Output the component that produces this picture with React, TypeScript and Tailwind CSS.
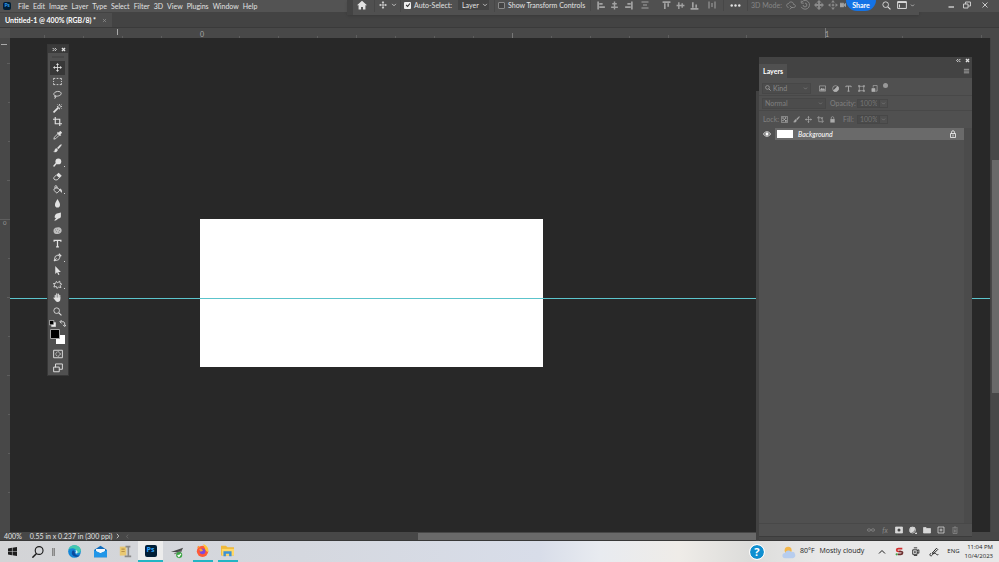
import React from "react";

type IconProps = { children: React.ReactNode; className?: string; box?: string };

/* Line icon on a 16-unit grid */
function Icon({ children, className = "size-[10px]", box = "0 0 16 16" }: IconProps) {
  return (
    <svg viewBox={box} className={`shrink-0 ${className}`} fill="none" stroke="currentColor" strokeWidth="1.5" aria-hidden="true">
      {children}
    </svg>
  );
}

const moveShape = (
  <>
    <path d="M8 2v12M2 8h12" />
    <path d="M8 0l2.6 3.4H5.4zM8 16l2.6-3.4H5.4zM0 8l3.4-2.6v5.2zM16 8l-3.4-2.6v5.2z" fill="currentColor" stroke="none" />
  </>
);
const brushShape = (
  <path d="M15 1c-1-.6-3 1-7.500 6.200l1.800 1.800C13.500 5 15.700 2 15 1zM6.500 8.200c-1.600-.2-2.700.8-3 2.300C3.200 12 2.500 13 1 13.500c2 1.500 6.800 1.200 7.300-3.200z" fill="currentColor" stroke="currentColor" strokeWidth=".6" />
);
const searchShape = (
  <>
    <circle cx="6.500" cy="6.500" r="5" />
    <path d="M10.300 10.300L15 15" strokeWidth="2" />
  </>
);
const lockShape = (
  <>
    <path d="M3 7h10v8H3z" fill="currentColor" stroke="none" />
    <path d="M5 7V4.500a3 3 0 0 1 6 0V7" />
  </>
);

const tools: { name: string; more?: boolean; art: React.ReactNode }[] = [
  { name: "Move", art: moveShape },
  { name: "Rectangular marquee", art: <path d="M1 5V2.500H4M6.500 2.500h3M12 2.500h3V5M15 7v2M15 11v2.500H12M9.500 13.500h-3M4 13.500H1V11M1 9V7" /> },
  { name: "Lasso", art: <path d="M4.500 10.500C1 9.500.5 6.500 3 4.500s7.500-2.800 10-1 2 4.800-1 6.200-5.500 1.500-7.500.8c-2 0-2 2.500-.2 2.500s1.500-2-.3-2.300M4 13c.3 1.500-.5 2.500-1.500 3" /> },
  { name: "Magic wand", art: <><path d="M1 15L10 6" strokeWidth="3" /><path d="M11.500 0v3M11.500 6.500v3M7 4.500h2.500M13 4.500h3M8 1l1.500 1.500M15 1l-1.500 1.500M15 8l-1.500-1.500" /></> },
  { name: "Crop", art: <path d="M4 0v12h12M0 4h12v12" strokeWidth="2" /> },
  { name: "Eyedropper", art: <><path d="M8.500 5L2.500 11 1.500 14.500 5 13.500 11 7.500" /><path d="M7.500 3.500l1-1 1.500 1L12 1.200c1.500-1.200 4 1 2.800 2.800L12.500 6l1 1.500-1 1z" fill="currentColor" /></> },
  { name: "Brush", art: brushShape },
  { name: "Dodge", more: true, art: <><circle cx="9.500" cy="6" r="5.200" fill="currentColor" stroke="none" /><path d="M6 9.500L1 15" strokeWidth="2.500" /></> },
  { name: "Eraser", art: <><path d="M5.500 5.500L10 1.500 15.500 6.500l-4 4z" fill="currentColor" stroke="none" /><path d="M5.500 5.500L1.500 10v2.500l2 1.500h4l3.500-3.500" /></> },
  { name: "Paint bucket", more: true, art: <><path d="M6 3.500L12.500 9 7 14.500 1 9z" /><path d="M3.500 7V2.500C3.500.5 7 .5 7 3v4" /><path d="M12.500 7c2 .5 3 2 2.500 6-1-1.500-1.500-3-3-4z" fill="currentColor" /></> },
  { name: "Blur", art: <path d="M8 0c2 4 4.500 6.500 4.500 10a4.500 5 0 0 1-9 0C3.500 6.500 6 4 8 0z" fill="currentColor" stroke="none" /> },
  { name: "Smudge", art: <path d="M3 8c0-3 3-6 6-6l5-1v7c0 2-2 3.500-4 3.500L5 15H2l4-5-2 .5c-1 0-1-1.500-1-2.500z" fill="currentColor" stroke="none" /> },
  { name: "Sponge", art: <><path d="M1 6.500C2 3 8 1.500 12 2.500c3 1 4 4.500 3 7.500-1 3-6 4.500-10 4C1.500 13.500.5 10 1 6.500z" fill="currentColor" stroke="none" opacity=".75" /><path d="M4 7h1M8 6h1M11 8h1M6 10h1M9 11h1" stroke="#555" /></> },
  { name: "Type", art: <path d="M2 5V2.500h12V5M8 2.500v12M5.500 14h5" strokeWidth="2.200" /> },
  { name: "Pen", more: true, art: <><path d="M2 14L4 6l5-2.500L12.500 7 10 12z" /><path d="M2 14l4.500-4.500" /><path d="M9.500 2.500l1.500-2 4.500 4.500-2 1.500z" fill="currentColor" stroke="none" /></> },
  { name: "Path selection", art: <path d="M4 0v14l3.300-3 2 5 2.200-1-2.200-4.500H14z" fill="currentColor" stroke="none" /> },
  { name: "Custom shape", more: true, art: <path d="M6 2.500l2 2.500 4-3 .5 4 3 1-2.500 2.500 1 4-4-1-3 2.500-1-3.500-4.500 1 1.500-4-2.500-2 4-.5z" /> },
  { name: "Hand", art: <><path d="M4 9V4M6.700 8V1.500M9.500 8V2M12 9V4" strokeWidth="2" strokeLinecap="round" /><path d="M3 8h10v3c0 3-2 5-4.500 5S5 14.500 3.500 12.500L.5 9c0-1.500 1.500-1.200 2.500 0z" fill="currentColor" stroke="none" /></> },
  { name: "Zoom", art: searchShape },
];

const menus = ["File", "Edit", "Image", "Layer", "Type", "Select", "Filter", "3D", "View", "Plugins", "Window", "Help"];

function PsMark({ className }: { className: string }) {
  return (
    <span className={`flex shrink-0 items-center justify-center rounded-[2px] bg-[#001e36] font-bold text-[#31a8ff] ${className}`}>Ps</span>
  );
}

function Chevron({ className = "size-[6px]" }: { className?: string }) {
  return <Icon className={className}><path d="M3 5l5 5 5-5" strokeWidth="2" /></Icon>;
}

function MenuBar() {
  return (
    <header className="flex h-[12px] shrink-0 items-center bg-[#535353] pl-[3px]">
      <PsMark className="size-[8px] text-[5px]" />
      <nav className="ml-[7px] flex gap-[4px] text-[7px] leading-[12px]">
        {menus.map((m) => (
          <button key={m} type="button">{m}</button>
        ))}
      </nav>
    </header>
  );
}

const alignIcons: { name: string; art: React.ReactNode; place: string }[] = [
  { name: "Align left", place: "ml-[6px]", art: <path d="M2 1v14M4 5h6M4 11h10" strokeWidth="3" /> },
  { name: "Align centre", place: "ml-[4px]", art: <path d="M8 1v14M4 5h8M2 11h12" strokeWidth="2.500" /> },
  { name: "Align right", place: "ml-[5px]", art: <path d="M14 1v14M6 5h6M2 11h10" strokeWidth="3" /> },
  { name: "Distribute", place: "ml-[8px]", art: <path d="M1 2h14M4 8h8M1 14h14" strokeWidth="2" /> },
  { name: "Align top", place: "ml-[13px]", art: <path d="M1 2h14M5 4v10M11 4v6" strokeWidth="3" /> },
  { name: "Align middle", place: "ml-[5px]", art: <path d="M1 8h14M5 2v12M11 4v8" strokeWidth="2.500" /> },
  { name: "Align bottom", place: "ml-[5px]", art: <path d="M1 14h14M5 2v10M11 6v6" strokeWidth="3" /> },
  { name: "Distribute across", place: "ml-[9px]", art: <path d="M2 1v14M8 4v8M14 1v14" strokeWidth="2" /> },
];

const threeD: React.ReactNode[] = [
  <path key="o" d="M4 12C0 11 0 6 4 6c1-4 8-4 8 1 4 0 4 5 0 5H8M6 9l3 3-3 3" />,
  <path key="r" d="M3 3a7 7 0 1 1-1 8M2 1v4h4M8 5a3 3 0 1 1-3 3" />,
  <><path key="p" d="M8 2v12M2 8h12" strokeWidth="3" /><path d="M8 0l4 4H4zM8 16l4-4H4zM0 8l4-4v8zM16 8l-4-4v8z" fill="currentColor" stroke="none" /></>,
  <><path key="s" d="M6 8h4M8 6v4" strokeWidth="2" /><path d="M8 0l3 4H5zM8 16l3-4H5zM0 8l4-3v6zM16 8l-4-3v6z" fill="currentColor" stroke="none" /></>,
];

function Rule({ className }: { className: string }) {
  return <span className={`h-[12px] w-px shrink-0 bg-[#474747] ${className}`} />;
}

function OptionsBar() {
  return (
    <section aria-label="Tool options" className="absolute left-[347px] top-0 flex h-[15px] w-[572px] items-start border-l-[6px] border-[#434343] bg-[#505050] pl-[4px] text-[7px] leading-[10px] shadow">
      <button type="button" aria-label="Home" className="flex h-[10px] items-center">
        <Icon><path d="M8 1L0 8.500h2.500V15H6.500v-4h3v4h4V8.500H16z" fill="currentColor" stroke="none" /></Icon>
      </button>
      <Rule className="ml-[7px]" />
      <button type="button" aria-label="Move tool presets" className="ml-[4px] flex h-[10px] items-center gap-[4px]">
        <Icon className="size-[8px]">{moveShape}</Icon>
        <Chevron />
      </button>
      <Rule className="ml-[3px]" />
      <label className="ml-[3px] flex h-[10px] w-[54px] shrink-0 items-center gap-[3px] whitespace-nowrap">
        <input type="checkbox" defaultChecked className="peer sr-only" />
        <span className="flex size-[7px] items-center justify-center rounded-[1px] bg-[#f0f0f0] text-[#333]">
          <Icon className="size-[6px]"><path d="M3 8l4 4 6-8" strokeWidth="3" /></Icon>
        </span>
        Auto-Select:
      </label>
      <label className="relative flex h-[10px] items-center bg-[#434343]">
        <select aria-label="Auto-select target" className="h-[10px] w-[31px] appearance-none bg-transparent pl-[4px] leading-[10px] outline-none">
          <option>Layer</option>
          <option>Group</option>
        </select>
        <span className="pointer-events-none absolute right-[1px] flex"><Chevron /></span>
      </label>
      <Rule className="ml-[5px]" />
      <label className="ml-[3px] flex h-[10px] items-center gap-[3px] whitespace-nowrap">
        <input type="checkbox" className="size-[7px] appearance-none rounded-[1px] border border-[#8a8a8a] bg-[#444]" />
        Show Transform Controls
      </label>
      <div className="ml-auto flex h-[12px] w-[333px] shrink-0 items-center pb-[2px]">
        <Rule className="ml-[4px]" />
        <div className="flex items-center text-[#a2a2a2]">
          {alignIcons.map((a) => (
            <button key={a.name} type="button" aria-label={a.name} className={`flex ${a.place}`}>
              <Icon className={a.name.startsWith("Align") ? "size-[9px]" : "size-[8px]"}>{a.art}</Icon>
            </button>
          ))}
        </div>
        <Rule className="ml-[7px]" />
        <button type="button" aria-label="More options" className="ml-[6px] flex">
          <Icon className="size-[11px]"><g fill="currentColor" stroke="none"><circle cx="2.500" cy="8" r="1.800" /><circle cx="8" cy="8" r="1.800" /><circle cx="13.500" cy="8" r="1.800" /></g></Icon>
        </button>
        <Rule className="ml-[6px]" />
        <span className="ml-[3px] w-[35px] whitespace-nowrap text-[#868686]">3D Mode:</span>
        <div className="flex gap-[4px] text-[#8a8a8a]">
          {threeD.map((s, i) => (
            <Icon key={i}>{s}</Icon>
          ))}
        </div>
        <Icon className="ml-[2px] size-[6px] text-[#a2a2a2]"><path d="M0 3h10v10H0zM10 8l6-5v10z" fill="currentColor" /></Icon>
        <button type="button" className="h-[11px] w-[30px] shrink-0 rounded-b-full bg-[#1473e6] font-bold text-white">Share</button>
        <button type="button" aria-label="Search" className="ml-[6px] flex"><Icon className="size-[9px]">{searchShape}</Icon></button>
        <button type="button" aria-label="Workspace" className="ml-[6px] flex items-center gap-[3px]">
          <Icon className="size-[10px]"><path d="M1 2.500h14v11H1zM1 4h14M4 7v5" strokeWidth="1.500" /></Icon>
          <Chevron className="size-[5px]" />
        </button>
      </div>
    </section>
  );
}

function WindowButtons() {
  return (
    <div className="absolute right-0 top-0 flex h-[12px] w-[80px] items-center justify-end gap-[8px] bg-[#505050] pb-[2px] pr-[10px] text-[#c8c8c8]">
      <button type="button" aria-label="Minimise"><Icon className="size-[8px]"><path d="M3 12h11" strokeWidth="3" /></Icon></button>
      <button type="button" aria-label="Restore"><Icon className="size-[8px]"><path d="M1 6h9v8H1zM5 6V2h10v8h-5" strokeWidth="2" /></Icon></button>
      <button type="button" aria-label="Close" className="ml-[2px]"><Icon className="size-[8px]"><path d="M3 3l10 10M13 3L3 13" strokeWidth="2" /></Icon></button>
    </div>
  );
}

function TopRuler() {
  return (
    <div className="h-[11px] shrink-0 border-t border-[#3a3a3a] bg-[#484848]">
      <svg width="990" height="10" className="block" aria-hidden="true">
        <path d="M0 10V0h10v10" fill="#505050" />
        <path d="M117.500 1v6" stroke="#aaa" />
        <path d="M512.500 5v5M825.500 0v10" stroke="#777" />
        <path d="M44.500 7v3M83.500 8v2M122.500 8v2M161.500 8v2M239.500 8v2M278.500 8v2M317.500 8v2M356.500 7v3M395.500 8v2M434.500 8v2M473.500 8v2M551.500 8v2M590.500 8v2M629.500 8v2M668.500 7v3M746.500 7v3M902.500 8v2M981.500 7v3" stroke="#5e5e5e" />
        <text x="200" y="9" fontSize="7" fill="#a8a8a8">0</text>
        <text x="825" y="9" fontSize="7" fill="#a8a8a8">1</text>
      </svg>
    </div>
  );
}

function SideRuler() {
  return (
    <div className="w-[10px] shrink-0 overflow-hidden bg-[#484848]">
      <svg width="10" height="494" className="block" aria-hidden="true">
        <path d="M1 6.500h6" stroke="#aaa" />
        <path d="M7 25.500h3M8 64.500h2M8 103.500h2M7 142.500h3M0 181.500h10M8 220.500h2M7 259.500h3M8 298.500h2M7 337.500h3M8 376.500h2M8 415.500h2M8 454.500h2" stroke="#5e5e5e" />
        <text x="3" y="187" fontSize="6" fill="#999">0</text>
      </svg>
    </div>
  );
}

function Workspace() {
  return (
    <main className="flex min-h-0 flex-1">
      <SideRuler />
      <div className="relative min-w-0 flex-1 overflow-hidden bg-[#282828]">
        <div className="absolute left-[190px] top-[181px] h-[148px] w-[343px] bg-white" />
        <div className="absolute inset-x-0 top-[260px] h-px bg-[#5cc4cc]" />
      </div>
      <div className="flex w-[9px] shrink-0 flex-col border-l border-[#424242] bg-[#484848]">
        <div className="mx-auto mt-[122px] h-[233px] w-[7px] bg-[#696969]" />
      </div>
    </main>
  );
}

function ToolBox() {
  return (
    <aside aria-label="Tools" className="absolute left-[48px] top-[45px] w-[20px] bg-[#505050] outline-1 outline-[#373737]">
      <div className="flex h-[8px] items-center justify-end gap-[4px] bg-[#3a3a3a] pr-[2px]">
        <Icon className="size-[5px]"><path d="M2 3l5 5-5 5M9 3l5 5-5 5" strokeWidth="3" /></Icon>
        <Icon className="size-[5px]"><path d="M3 3l10 10M13 3L3 13" strokeWidth="4" /></Icon>
      </div>
      <div className="mx-auto mt-[3px] h-[2px] w-[12px] bg-[#474747]" />
      <div className="mt-[3px] flex h-[257px] flex-col">
        {tools.map((t, i) => (
          <button key={t.name} type="button" aria-label={t.name} className={`relative ml-[2px] mr-[3px] flex min-h-0 flex-1 items-center justify-center ${i === 0 ? "bg-[#383838]" : ""}`}>
            <Icon className="size-[9px]">{t.art}</Icon>
            {t.more && <span className="absolute bottom-[2px] right-0 size-[1px] bg-[#d0d0d0]" />}
          </button>
        ))}
      </div>
      <div className="mt-[2px] flex h-[6px] items-center justify-between pl-[1px] pr-[2px]">
        <Icon className="size-[7px]"><path d="M6 6h9v9H6z" fill="#eee" /><path d="M1 1h10v10H1z" fill="#000" /></Icon>
        <Icon className="size-[7px]"><path d="M3 4h6c3 0 4 2 4 5v4M6 0L2 4l4 4M9 11l4 4 3-4" strokeWidth="2" /></Icon>
      </div>
      <svg viewBox="0 0 16 16" className="mx-auto mt-[3px] block size-[16px]" role="img" aria-label="Foreground and background colours">
        <path d="M6 6h9v9H6z" fill="#fff" />
        <path d="M.5.500h9v9h-9z" fill="#000" stroke="#a5a5a5" />
      </svg>
      <button type="button" aria-label="Quick mask" className="mx-auto mt-[4px] flex"><Icon><path d="M1 2h14v12H1z" /><circle cx="8" cy="8" r="3.500" strokeDasharray="2 1" /></Icon></button>
      <button type="button" aria-label="Screen mode" className="mx-auto mt-[4px] flex"><Icon><path d="M4 7V1.500h11V10h-5M1 6.500h9V14H1z" /></Icon></button>
      <div className="h-[2px]" />
    </aside>
  );
}

const filterIcons: React.ReactNode[] = [
  <><path d="M1 2h14v12H1z" /><path d="M3 12l3-5 3 3 2-2 2 4z" fill="currentColor" /></>,
  <><circle cx="8" cy="8" r="6.500" /><path d="M3 13A7 7 0 0 0 13 3z" fill="currentColor" /></>,
  <path d="M2 5V2.500h12V5M8 2.500v12M5.500 14h5" strokeWidth="2" />,
  <path d="M3 3h10v10H3zM1 1h3v3H1zM12 1h3v3h-3zM1 12h3v3H1zM12 12h3v3h-3z" />,
  <><path d="M5 6V1h9v13h-4" /><path d="M2 8h7v7H2z" fill="currentColor" /></>,
];
const lockIcons: React.ReactNode[] = [
  <><path d="M1 1h14v14H1z" /><path d="M3 3h3v3H3zM9 3h3v3H9zM6 6h3v3H6zM3 9h3v3H3zM9 9h4v4H9z" fill="currentColor" stroke="none" /></>,
  brushShape,
  moveShape,
  <path d="M0 4h12v12M4 4v9h7M4 0v4M12 12h4M9 7l5-4" />,
  lockShape,
];

function PanelValue({ label, id, labelClass }: { label: string; id: string; labelClass: string }) {
  return (
    <div className="flex items-center text-[#808080]">
      <label htmlFor={id} className={`shrink-0 whitespace-nowrap ${labelClass}`}>{label}</label>
      <input id={id} defaultValue="100%" className="h-[9px] w-[23px] border border-[#474747] bg-[#4a4a4a] px-[2px] text-[7px] text-[#747474] outline-none" />
      <span className="flex h-[9px] w-[8px] items-center justify-center border border-l-0 border-[#474747]"><Chevron className="size-[5px]" /></span>
    </div>
  );
}

function LayersPanel() {
  return (
    <aside aria-label="Layers panel" className="absolute bottom-[25px] right-[27px] top-[57px] flex w-[213px] flex-col bg-[#505050] text-[7px] leading-[9px]">
      <div className="flex h-[7px] items-center justify-end gap-[4px] bg-[#434343] pr-[2px]">
        <Icon className="size-[5px]"><path d="M7 3L2 8l5 5M14 3L9 8l5 5" strokeWidth="3" /></Icon>
        <Icon className="size-[5px]"><path d="M3 3l10 10M13 3L3 13" strokeWidth="4" /></Icon>
      </div>
      <div className="flex h-[14px] items-center justify-between bg-[#434343] pr-[2px]">
        <h2 className="flex h-full items-center bg-[#505050] px-[4px] font-bold text-white">Layers</h2>
        <button type="button" aria-label="Panel menu" className="flex text-[#aaa]"><Icon className="size-[7px]"><path d="M2 3h12M2 7h12M2 11h12" strokeWidth="2" /></Icon></button>
      </div>
      <div className="flex h-[18px] shrink-0 items-center border-b border-[#484848] pl-[3px] pt-[3px]">
        <label className="flex h-[11px] w-[49px] items-center border border-[#474747] bg-[#4c4c4c] px-[2px] text-[#8a8a8a]">
          <Icon className="size-[6px] text-[#bbb]">{searchShape}</Icon>
          <select aria-label="Filter kind" className="ml-[2px] min-w-0 flex-1 appearance-none bg-transparent outline-none"><option>Kind</option><option>Name</option></select>
          <Chevron className="size-[5px]" />
        </label>
        <div className="ml-[8px] flex gap-[5px] text-[#b0b0b0]">
          {filterIcons.map((s, i) => (
            <button key={i} type="button" aria-label={`Filter ${i + 1}`} className="flex w-[8px]"><Icon className="size-[7px]">{s}</Icon></button>
          ))}
        </div>
        <span className="mb-[5px] ml-[4px] size-[5px] rounded-full bg-[#999]" />
      </div>
      <div className="flex h-[15px] shrink-0 items-center border-b border-[#484848] pl-[3px]">
        <label className="mr-[4px] flex h-[11px] w-[64px] items-center border border-[#474747] bg-[#4c4c4c] px-[2px] text-[#808080]">
          <select aria-label="Blend mode" className="min-w-0 flex-1 appearance-none bg-transparent outline-none"><option>Normal</option><option>Multiply</option></select>
          <Chevron className="size-[5px]" />
        </label>
        <PanelValue id="opacity" label="Opacity:" labelClass="w-[27px]" />
      </div>
      <div className="flex h-[17px] shrink-0 items-center pl-[4px] text-[#808080]">
        <span className="w-[18px]">Lock:</span>
        <div className="mr-[6px] flex gap-[4px] text-[#aaa]">
          {lockIcons.map((s, i) => (
            <button key={i} type="button" aria-label={`Lock ${i + 1}`} className="flex w-[8px]"><Icon className="size-[7px]">{s}</Icon></button>
          ))}
        </div>
        <PanelValue id="fill" label="Fill:" labelClass="w-[14px]" />
      </div>
      <div className="flex min-h-0 flex-1">
        <ul className="flex-1">
          <li className="flex h-[12px] items-center pl-[4px]">
            <button type="button" aria-label="Toggle visibility" className="flex text-white"><Icon className="size-[8px]"><path d="M1 8c3-6 11-6 14 0-3 6-11 6-14 0z" /><circle cx="8" cy="8" r="2.500" fill="currentColor" /></Icon></button>
            <div className="ml-[4px] flex h-[12px] flex-1 items-center bg-[#6a6a6a] pl-[2px] pr-[7px] text-white">
              <span className="h-[8px] w-[16px] bg-white" />
              <span className="ml-[5px] flex-1 italic">Background</span>
              <Icon className="size-[8px]"><path d="M3 7h10v8H3zM5 7V4.500a3 3 0 0 1 6 0V7M8 9v4" /></Icon>
            </div>
          </li>
        </ul>
        <div className="w-[8px] bg-[#4b4b4b]" />
      </div>
      <footer className="flex h-[13px] shrink-0 items-center justify-end gap-[6px] border-t border-[#484848] pr-[13px] text-[#d8d8d8]">
        <Icon className="size-[8px] text-[#8a8a8a]"><ellipse cx="4" cy="8" rx="3.200" ry="2.500" /><ellipse cx="12" cy="8" rx="3.200" ry="2.500" /></Icon>
        <button type="button" className="w-[8px] italic text-[#8a8a8a]">fx</button>
        <Icon className="size-[8px]"><path d="M1 2h14v12H1z" fill="currentColor" /><circle cx="8" cy="8" r="3" fill="#444" stroke="none" /></Icon>
        <Icon className="size-[8px]"><circle cx="7" cy="8" r="6" /><path d="M2 12A7 7 0 0 0 11 3L3 3z" fill="currentColor" /><path d="M13 14h3v2h-3z" fill="currentColor" /></Icon>
        <Icon className="size-[8px]"><path d="M1 3h5l2 2h7v9H1z" fill="currentColor" /></Icon>
        <Icon className="size-[8px]"><path d="M2 2h12v12H2zM8 5v6M5 8h6" /></Icon>
        <Icon className="size-[8px] text-[#8a8a8a]"><path d="M2 4h12M6 4V2h4v2M4 6v9h8V6M7 7v6M9.500 7v6" /></Icon>
      </footer>
      <div className="h-px shrink-0 bg-[#3c3c3c]" />
    </aside>
  );
}

function Taskbar() {
  return (
    <footer className="flex h-[21px] shrink-0 items-center bg-[linear-gradient(90deg,#d3d4d6_0%,#d5d8df_30%,#d8dde9_54%,#e8ebf0_60%,#efece8_68%,#dcdcda_75%,#e8e8e8_82%)] text-[8px] text-[#1c1c1c] [font-family:'Open_Sans','Noto_Sans',sans-serif]">
      <div className="flex h-full items-center [&>button]:flex [&>button]:h-full [&>button]:items-center [&>button]:justify-center">
        <button type="button" aria-label="Start" className="w-[25px]"><Icon className="size-[9px]"><path d="M0 2.500l7-1v6H0zM8 1.300L16 0v7.500H8zM0 8.500h7v6l-7-1zM8 8.500h8V16l-8-1.300z" fill="currentColor" stroke="none" /></Icon></button>
        <button type="button" aria-label="Search" className="w-[25px]"><Icon className="size-[12px]"><circle cx="9.500" cy="6" r="5.200" /><path d="M6 10L.5 15.500" strokeWidth="2" /></Icon></button>
        <span className="ml-[2px] mr-[7px] h-[8px] w-[3px] border-x border-[#888] bg-[#aaa]" />
        <button type="button" aria-label="Edge" className="w-[25px]">
          <Icon className="size-[13px]"><circle cx="8" cy="8" r="7.800" fill="#1386d8" stroke="none" /><path d="M.5 7C1-2 15-1.500 15.800 6.500c0 4-5.500 4.500-6.300 2.500 1.500-3-1-5-4-5-2.500 0-4.500 1-5 3z" fill="#43c9ae" stroke="none" /><path d="M5.500 7c-2.500 4 1 8 6.500 7.500 1-.3 2-1 2.700-2-3 1.500-7-.2-6.500-4.200-.5-1.800-2-2-2.700-1.300z" fill="#0b4a9c" stroke="none" /><path d="M9 9.500c1-.5 1-2.500 0-3.500 3 0 4 4 1 4.500z" fill="#d5e8f5" stroke="none" /></Icon>
        </button>
        <button type="button" aria-label="Mail" className="w-[26px]">
          <Icon className="size-[13px]"><path d="M0 6l8-5 8 5v9H0z" fill="#0f6cbd" stroke="none" /><path d="M2.500 5h11V8L8 10 2.500 8z" fill="#f4f8fc" stroke="none" /><path d="M0 6l8 4 8-4v9H0z" fill="#2196e8" stroke="none" /></Icon>
        </button>
        <button type="button" aria-label="Archiver" className="w-[25px]">
          <Icon className="size-[13px]"><path d="M1 2h8v11H1z" fill="#e9c872" stroke="none" /><path d="M8 2h6M7 14h8M11.500 3v11" stroke="#8a8a8a" strokeWidth="2" /><path d="M3 5h4M3 8h4" stroke="#b8924a" /></Icon>
        </button>
        <button type="button" aria-label="Photoshop" className="w-[25px] border-b-2 border-[#22b5c4] bg-[#ececec]"><PsMark className="size-[12px] text-[7px]" /></button>
        <button type="button" aria-label="Pen utility" className="w-[27px]">
          <Icon className="size-[14px]"><path d="M1 8L15 3 12 9c-2-1-4-1-11-1z" fill="#4a4a4a" stroke="none" /><path d="M5 10l8-3" stroke="#777" /><circle cx="10.500" cy="11.500" r="3.500" fill="#3da545" stroke="none" /><path d="M8.800 11.500l1.400 1.500 2.200-2.800" stroke="#fff" /></Icon>
        </button>
        <button type="button" aria-label="Firefox" className="w-[25px]">
          <span className="flex h-full w-[20px] items-center justify-center border-b-2 border-[#22b5c4]">
            <Icon className="size-[13px]"><circle cx="8" cy="9" r="7" fill="#ff5a36" stroke="none" /><path d="M9 0c5 2 7 6 6 10-2-1-4-2-4-5-1-1-2-3-2-5z" fill="#ffc53a" stroke="none" /><path d="M1.500 5l1-3 3 2z" fill="#ff8d2b" stroke="none" /><circle cx="8" cy="9" r="3.500" fill="#7a4ae0" stroke="none" /><path d="M4 6c3-1 4 1 5 2-2 0-2 2-4 1z" fill="#ffa52f" stroke="none" /></Icon>
          </span>
        </button>
        <button type="button" aria-label="File Explorer" className="w-[25px]">
          <span className="flex h-full w-[20px] items-center justify-center border-b-2 border-[#22b5c4]">
            <Icon className="size-[13px]"><path d="M0 2h6l2 2h8v10H0z" fill="#f0b93a" stroke="none" /><path d="M1 6h15v8H1z" fill="#ffd867" stroke="none" /><path d="M3 15V9h10v6h-3v-3H6v3z" fill="#3c91d6" stroke="none" /></Icon>
          </span>
        </button>
      </div>
      <div className="ml-auto flex h-full items-center whitespace-nowrap pr-[6px]">
        <button type="button" aria-label="Help" className="flex size-[14px] items-center justify-center rounded-full bg-[#0f8fd0] text-[11px] font-bold leading-none text-white outline-1 outline-white">?</button>
        <button type="button" className="ml-[18px] flex items-center text-[7px]">
          <Icon className="size-[14px]"><circle cx="7" cy="6" r="4" fill="#f3b64a" stroke="none" /><path d="M3.500 15a3 3 0 0 1 0-6 4 4 0 0 1 7-1 3.600 3.600 0 0 1 2 7z" fill="#b7cdee" stroke="none" /></Icon>
          <span className="ml-[4px]">80°F</span>
          <span className="ml-[5px]">Mostly cloudy</span>
        </button>
        <button type="button" aria-label="Hidden icons" className="ml-[14px] flex"><Icon className="size-[8px]"><path d="M2 11l6-6 6 6" strokeWidth="2" /></Icon></button>
        <Icon className="ml-[9px] size-[9px]"><path d="M13 3H6C2 3 2 8 6 8h5" stroke="#d02f2f" strokeWidth="3" /><path d="M7 8h3c5 0 4 5 0 5H5" stroke="#6d3030" strokeWidth="3" /><circle cx="3" cy="13" r="2" fill="#45a046" stroke="none" /></Icon>
        <Icon className="ml-[7px] size-[9px]"><path d="M3 5h8v8H3zM5 1.500h6M5 15h6M11 6l3-1v6l-3-1" /><circle cx="7" cy="9" r="1" /></Icon>
        <Icon className="ml-[9px] size-[10px]"><path d="M3 10C0 12 2 15 4 14s2-4 5-4 3 4 6 2M5 10l7-8 2 2-6 6z" /></Icon>
        <span className="ml-[8px] text-[6px]">ENG</span>
        <div className="ml-[5px] text-right text-[6px] leading-[9px]"><div>11:04 PM</div><div>10/4/2023</div></div>
      </div>
    </footer>
  );
}

export default function App() {
  return (
    <div className="relative flex h-screen w-full flex-col overflow-hidden bg-[#434343] text-[7px] text-[#e2e2e2] [font-family:Lato,'Open_Sans',sans-serif]">
      <MenuBar />
      <div className="flex h-[15px] shrink-0 items-end bg-[#434343]">
        <div className="flex h-[14px] items-center gap-[6px] bg-[#4d4d4d] pl-[5px] pr-[5px] font-bold text-white">
          Untitled-1 @ 400% (RGB/8) *
          <button type="button" aria-label="Close document" className="flex text-[#999]"><Icon className="size-[5px]"><path d="M3 3l10 10M13 3L3 13" strokeWidth="2" /></Icon></button>
        </div>
      </div>
      <TopRuler />
      <Workspace />
      <div className="flex h-[9px] shrink-0 items-center border-b border-[#383838] bg-[#474747] pl-[4px] text-[7px] leading-[8px]">
        <span>400%</span>
        <span className="ml-[8px]">0.55 in x 0.237 in (300 ppi)</span>
        <Icon className="ml-[3px] size-[6px]"><path d="M5 2l5 6-5 6" strokeWidth="2" /></Icon>
        <Icon className="ml-[4px] size-[5px] text-[#888]"><path d="M10 2L5 8l5 6" /></Icon>
        <div className="ml-auto mr-[243px] h-[7px] w-[34%] bg-[#696969]" />
      </div>
      <Taskbar />
      <OptionsBar />
      <WindowButtons />
      <ToolBox />
      <div className="absolute bottom-[21px] right-[240px] top-[91px] w-[3px] bg-[#424242]" />
      <LayersPanel />
    </div>
  );
}
